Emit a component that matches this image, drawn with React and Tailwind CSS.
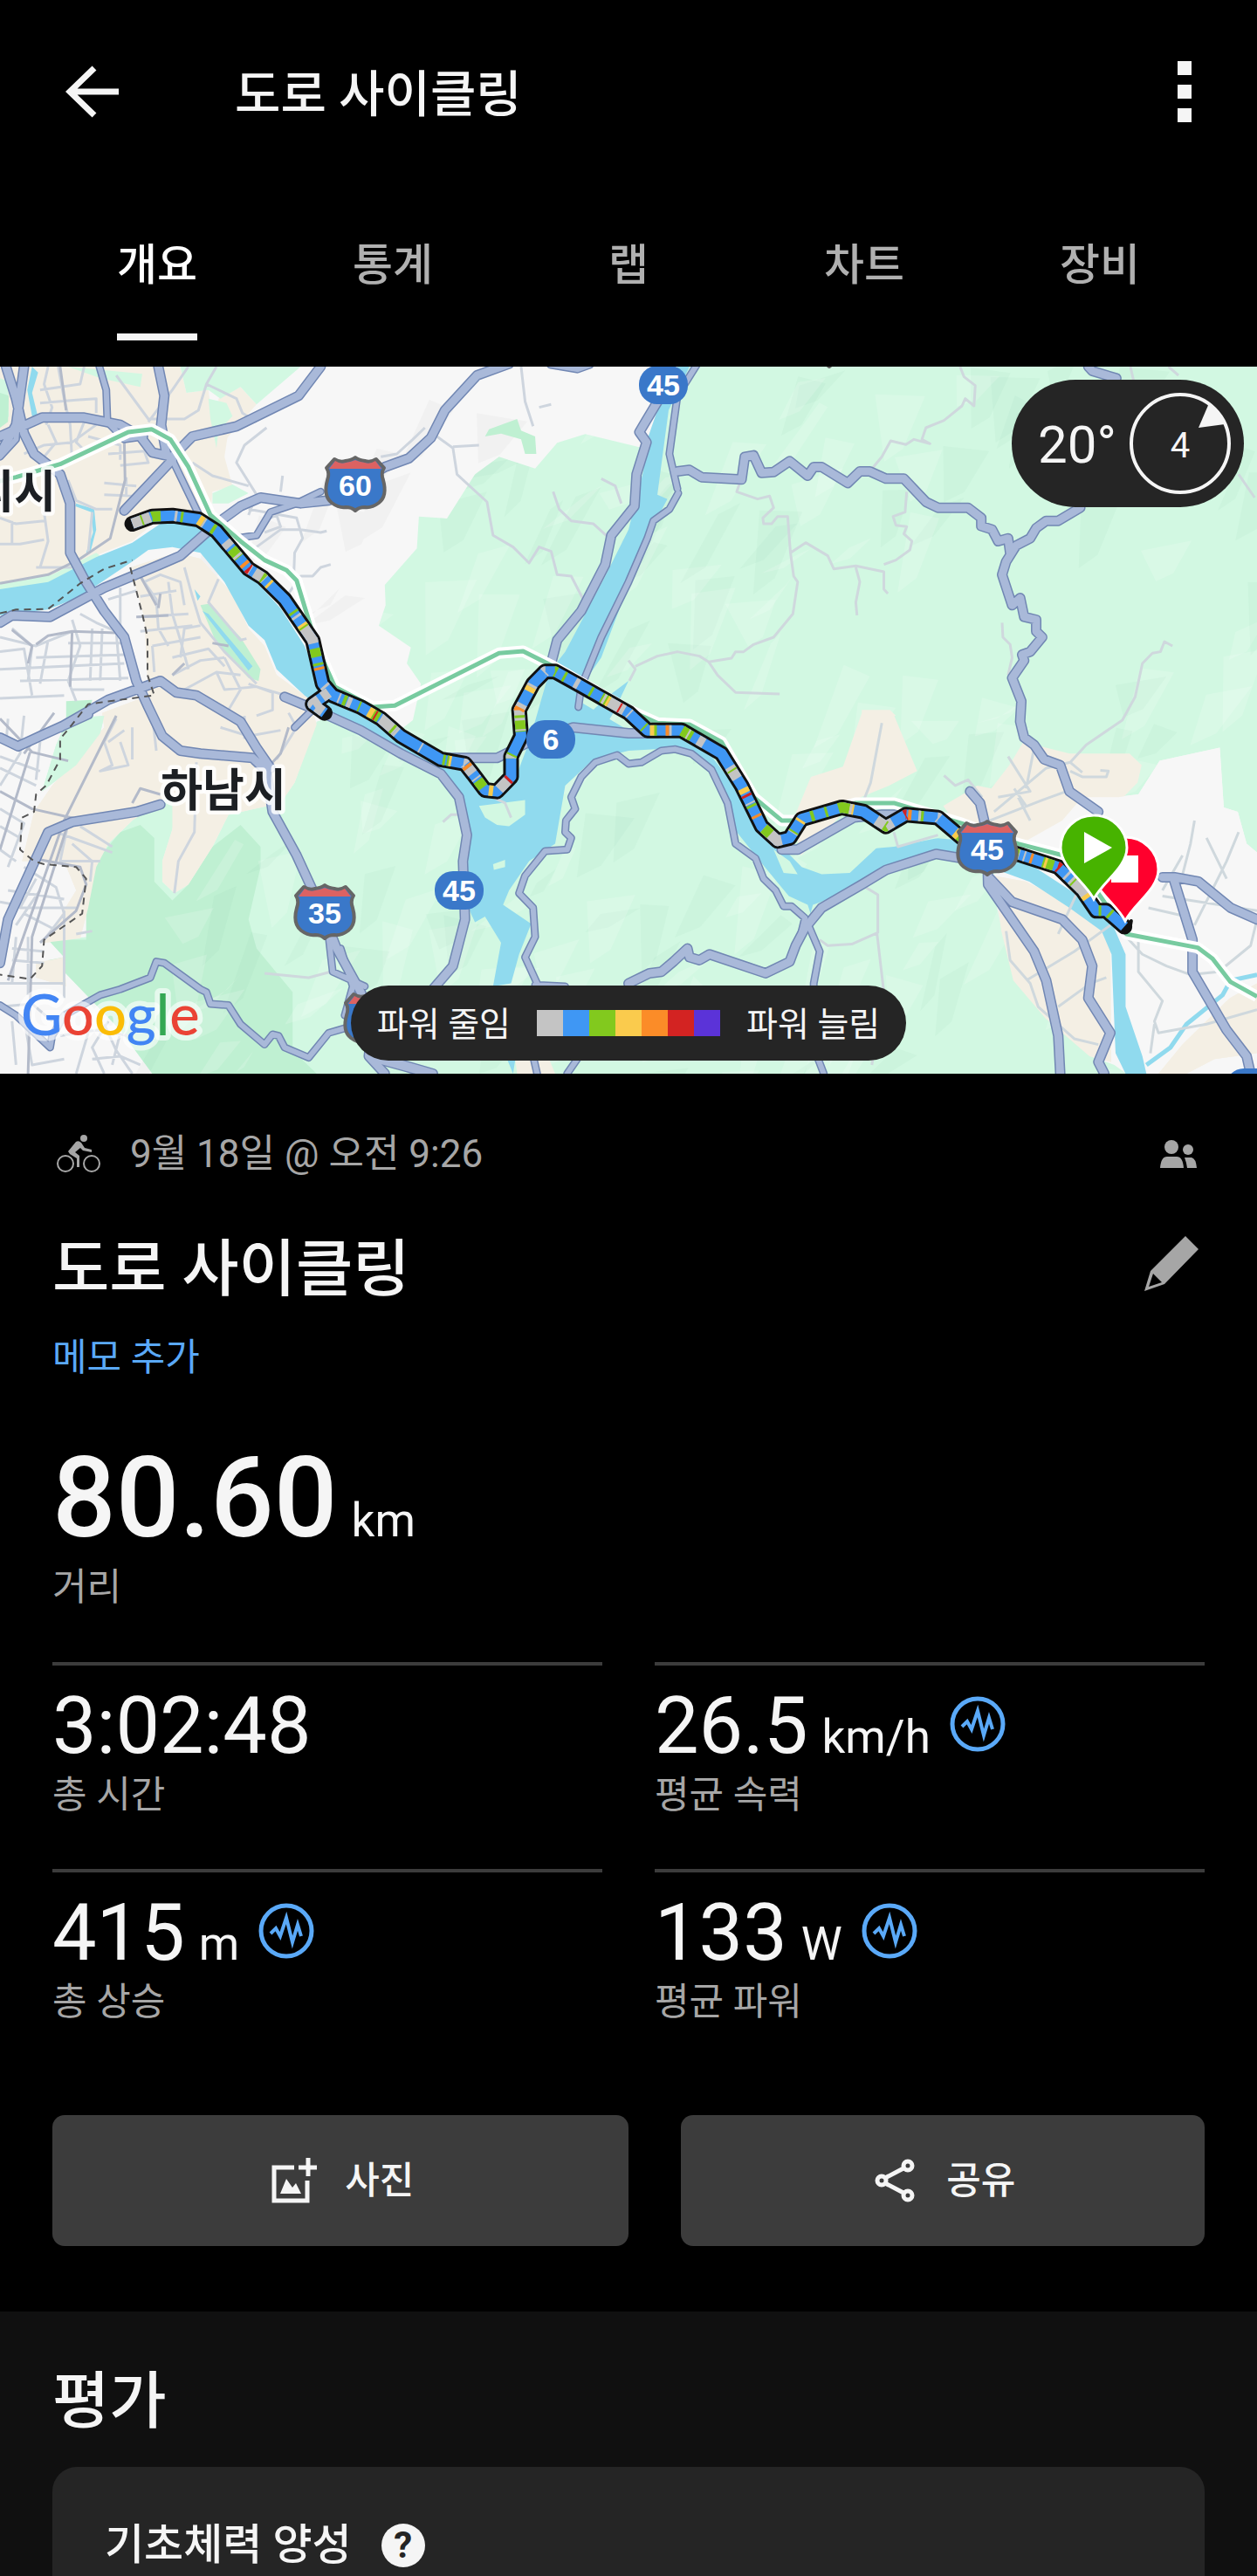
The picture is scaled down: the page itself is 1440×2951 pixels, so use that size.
import { useState } from "react";

const tabs = ["개요", "통계", "랩", "차트", "장비"];

const legendColors = [
  "bg-[#c4c4c4]",
  "bg-[#3f97f4]",
  "bg-[#82c91e]",
  "bg-[#facb4d]",
  "bg-[#fb8c28]",
  "bg-[#d32322]",
  "bg-[#5b33d8]",
];

const stats = [
  { value: "3:02:48", unit: "", label: "총 시간", chart: false },
  { value: "26.5", unit: "km/h", label: "평균 속력", chart: true },
  { value: "415", unit: "m", label: "총 상승", chart: true },
  { value: "133", unit: "W", label: "평균 파워", chart: true },
];

// Map geometry lives on a 3136 x 2430 grid that is scaled down to 1440 x 810
const greens = [
  "M1700,0 L3136,0 L3136,1670 L3110,1640 L3088,1530 L3053,1515 L3043,1310 L2893,1355 L2840,1470 L2700,1490 L2560,1700 L2470,1750 L2500,1940 L2530,2110 L2610,2240 L2720,2370 L2780,2400 L2810,2430 L380,2430 L300,2280 L160,2080 L120,2060 L160,2030 L120,1970 L180,1965 L220,1960 L215,1800 L240,1720 L270,1640 L330,1560 L350,1400 L430,1270 L470,1300 L460,1380 L430,1590 L405,1700 L405,1770 L435,1810 L470,1780 L530,1650 L570,1540 L700,1500 L735,1430 L790,1220 L870,1180 L960,1290 L1030,1215 L1050,1090 L1015,1020 L1025,965 L945,890 L962,820 L960,750 L1040,625 L1045,515 L1115,522 L1185,370 L1245,310 L1335,350 L1390,262 L1460,232 L1620,285 Z",
  "M450,0 L750,0 L640,130 L600,70 L550,110 L520,80 L465,90 Z",
  "M520,110 L565,125 L580,170 L545,220 L540,280 L525,180 Z",
  "M0,40 L20,50 L22,170 L0,210 Z",
  "M530,435 L580,405 L620,435 L570,470 L530,470 Z",
  "M170,0 L355,25 L350,70 L250,40 Z",
  "M0,740 L130,715 L240,640 L260,660 L130,745 L0,775 Z",
  "M170,1210 L260,1200 L250,1260 L190,1370 L105,1460 L140,1300 Z",
];

const darkGreens = [
  "M300,1600 L350,1575 L385,1620 L385,1770 L430,1835 L470,1780 L530,1650 L600,1575 L650,1650 L650,1720 L620,1900 L640,2000 L730,2150 L730,2350 L790,2430 L380,2430 L300,2280 L160,2080 L120,2040 L160,2030 L120,1970 L215,1970 L215,1800 L240,1700 Z",
  "M500,820 L520,815 L600,930 L650,1040 L645,1080 L620,1070 L540,950 Z",
  "M1210,240 L1220,215 L1290,180 L1300,220 L1335,240 L1338,300 L1310,300 L1300,250 L1250,230 Z",
  "M165,1150 L230,1145 L225,1175 L165,1210 Z",
  "M0,90 L22,100 L20,190 L0,210 Z",
];

const towns = [
  "M0,0 L450,0 L465,90 L520,80 L535,250 L570,220 L560,310 L580,410 L530,430 L525,510 L400,520 L330,600 L200,670 L120,725 L0,745 Z",
  "M545,110 L600,70 L640,130 L570,240 L545,290 Z",
  "M325,690 L440,640 L500,660 L580,780 L620,900 L660,960 L690,1060 L770,1140 L790,1230 L735,1430 L700,1500 L570,1540 L530,1650 L470,1780 L435,1810 L405,1770 L405,1700 L430,1590 L430,1470 L330,1560 L270,1640 L240,1720 L220,1860 L200,1965 L110,1980 L190,1800 L160,1700 L55,1700 L85,1530 L130,1440 L260,1240 L255,1190 L370,1130 L360,860 Z",
  "M90,2050 L160,2030 L165,2130 L90,2100 Z",
  "M2158,1180 L2228,1190 L2288,1390 L2218,1440 L2130,1490 L2060,1600 L1998,1680 L1978,1560 L2023,1410 L2103,1375 L2150,1190 Z",
  "M2353,1510 L2438,1440 L2473,1450 L2518,1370 L2553,1290 L2668,1330 L2818,1330 L2848,1370 L2838,1430 L2760,1540 L2690,1640 L2560,1640 L2400,1600 Z",
  "M2480,1750 L2560,1770 L2700,1870 L2770,1970 L2772,2390 L2718,2370 L2608,2240 L2528,2110 L2498,1940 Z",
  "M2150,1180 L2220,1180 L2235,1200 L2150,1200 Z",
  "M2890,2430 L2950,2330 L3068,2170 L3136,2120 L3136,2360 L3030,2380 L2960,2430 Z",
  "M1285,2380 L1370,2380 L1385,2430 L1290,2430 Z",
];

const whites = [
  "M2790,1480 L2840,1470 L2893,1355 L3043,1310 L3053,1515 L3088,1530 L3110,1640 L3136,1670 L3136,2110 L3068,2170 L2998,2240 L2858,2400 L2780,2180 L2770,1960 L2650,1780 L2540,1680 L2560,1630 L2650,1560 L2700,1480 Z",
];

const waters = [
  "M0,765 L120,740 L240,655 L330,605 L400,540 L500,540 L600,680 L700,830 L760,960 L800,1090 L870,1170 L980,1260 L1100,1370 L1170,1390 L1230,1480 L1290,1400 L1320,1290 L1370,1050 L1410,980 L1510,720 L1568,560 L1605,360 L1615,250 L1640,150 L1690,0 L1720,0 L1668,150 L1640,440 L1665,455 L1640,520 L1568,750 L1500,1000 L1460,1080 L1445,1150 L1568,1250 L1630,1270 L1700,1270 L1770,1330 L1820,1420 L1870,1510 L1910,1620 L1950,1650 L2000,1720 L2050,1745 L2120,1740 L2190,1650 L2330,1620 L2420,1630 L2570,1710 L2670,1800 L2770,1900 L2808,2020 L2808,2200 L2850,2370 L2860,2430 L2808,2430 L2783,2360 L2773,2020 L2748,1940 L2668,1860 L2568,1770 L2468,1720 L2368,1690 L2298,1690 L2208,1740 L2128,1790 L2048,1840 L2028,1850 L2022,1880 L2015,1850 L1968,1820 L1908,1720 L1838,1600 L1818,1500 L1783,1390 L1700,1310 L1568,1320 L1480,1350 L1410,1440 L1385,1640 L1320,1700 L1270,1800 L1255,1850 L1325,1915 L1295,2020 L1275,2120 L1230,2130 L1250,1980 L1210,1890 L1185,1910 L1165,1850 L1170,1590 L1150,1470 L1100,1400 L1000,1320 L840,1210 L760,1130 L690,1040 L660,940 L620,890 L560,740 L500,640 L430,620 L370,630 L330,670 L200,790 L120,835 L0,855 Z",
  "M80,0 L95,20 L80,90 L95,175 L80,170 L68,80 Z",
  "M505,840 L520,850 L630,1030 L620,1045 Z",
  "M190,470 L235,490 L240,560 L225,640 L215,640 L232,570 L228,500 L188,480 Z",
  "M1480,1180 L1510,1140 L1568,1080 L1530,1190 L1500,1260 Z",
  "M1265,2380 L1285,2385 L1280,2430 Z",
  "M485,765 L500,790 L493,805 Z",
];

const islands = [
  "M1195,1510 L1250,1500 L1310,1490 L1310,1540 L1270,1580 L1240,1575 L1210,1550 Z",
  "M1230,1710 L1260,1695 L1260,1720 L1232,1730 Z",
  "M1930,1660 L1970,1700 L1990,1745 L1955,1740 Z",
  "M1990,1690 L2060,1640 L2250,1560 L2400,1570 L2340,1620 L2230,1650 L2150,1660 L2110,1740 L2050,1740 Z",
];

const majorRoads = [
  "M15,0 L40,110 L60,230 L85,300 L150,370 L175,470 L175,640 L210,730 L260,840 L310,930 L340,1080 L370,1170 L405,1270 L450,1320 L500,1330 L630,1345 L665,1390 L680,1530 L740,1680 L800,1860 L840,2000 L900,2150 L930,2250 L920,2370 L960,2430",
  "M60,0 L40,200 L0,300",
  "M0,240 L105,175 L210,175 L300,200 L350,240 L380,295 L430,310 L480,240 L590,205 L745,100 L800,0",
  "M395,0 L410,100 L402,200 L415,300",
  "M430,320 L310,495",
  "M0,880 L30,855 L125,860 L260,760 L400,680 L450,650 L540,540 L600,480 L650,450 L750,470 L820,460 L960,345 L1020,315 L1075,245 L1110,150 L1190,30 L1270,-10",
  "M1375,-10 L1440,5 L1470,-10",
  "M150,1240 L270,1145 L400,1080 L440,1120 L490,1130 L600,1220 L640,1310 L675,1380",
  "M0,2050 L20,1900 L120,1600 L180,1565 L340,1530 L400,1505",
  "M0,1275 L45,1305 L100,1270 L220,1195",
  "M710,1135 L780,1175 L900,1250 L1000,1330 L1100,1400 L1145,1480 L1165,1610 L1155,1700 L1160,1900 L1130,2060 L1080,2140",
  "M2420,1460 L2445,1500 L2462,1600 L2465,1780 L2580,2010 L2610,2110 L2640,2300 L2645,2430",
  "M2470,1760 L2525,1840 L2650,1900 L2700,1970 L2725,2060 L2715,2170 L2770,2290 L2740,2390 L2755,2430",
  "M1568,2120 L1620,2085 L1650,2080 L1680,2045 L1715,2000 L1720,2030 L1745,2040 L1770,2020 L1910,2085 L1970,2045 L1985,1990 L2008,1930 L2050,1860 L2150,1780 L2210,1730 L2335,1675 L2400,1690",
  "M2695,485 L2640,530 L2610,530 L2585,555 L2570,590 L2535,615 L2510,670 L2500,715 L2525,820 L2545,795 L2555,860 L2585,870 L2585,910 L2600,930 L2570,980 L2550,990 L2555,1010 L2525,1070 L2548,1150 L2545,1220 L2555,1275 L2580,1300 L2605,1350 L2645,1370 L2668,1460 L2740,1530",
  "M2715,0 L2725,15 L2785,40",
  "M1690,360 L1720,355 L1750,380 L1850,388 L1858,310 L1880,305 L1900,365 L1930,362 L1970,325 L2015,375 L2030,345 L2050,345 L2115,400 L2145,360 L2170,360 L2210,385 L2255,385 L2310,465 L2340,485 L2415,485 L2448,520 L2448,548 L2475,560 L2490,600 L2515,590 L2520,640",
  "M2900,1755 L2930,1755 L2990,1770 L3070,1860 L3136,1900",
  "M2930,1770 L2975,1970 L2975,2080 L3060,2280 L3110,2370 L3120,2430",
  "M1645,110 L1610,190 L1595,225 L1613,260 L1588,370 L1583,480 L1525,580 L1510,680 L1450,840 L1390,940 L1375,1020",
  "M1950,1660 L1990,1660 L2130,1550 L2200,1540 L2250,1540",
  "M1120,1345 L1240,1345 L1320,1290 L1430,1240 L1568,1260 L1640,1260",
  "M930,2370 L1080,2430",
];

const minorHighways = [
  "M248,0 L265,80 L268,190 L310,250 L360,240",
  "M590,590 L640,580 L675,500 L740,470 L800,430",
  "M430,320 L465,420 L500,520",
  "M735,1240 L790,1165",
  "M1740,-10 L1690,100 L1670,300 L1690,420",
  "M1692,435 L1670,490 L1630,530 L1615,590 L1568,740 L1500,930 L1450,1100 L1443,1170",
  "M1340,2430 L1330,2370 L1340,2120 L1310,2030 L1335,1960 L1330,1860 L1295,1810 L1310,1750 L1360,1665 L1415,1660 L1425,1620 L1410,1600 L1412,1560 L1435,1520 L1425,1480 L1450,1410 L1485,1360 L1540,1335 L1568,1365 L1600,1360 L1650,1320 L1685,1315 L1725,1330 L1775,1385 L1815,1500 L1835,1640 L1885,1690 L1905,1760 L1935,1800 L1955,1855 L1975,1855 L2008,1895 L2000,1940",
  "M2020,1930 L2045,2010 L2030,2120 L2030,2340 L2055,2430",
  "M0,2195 L40,2230 L125,2340 L130,2300 L160,2230 L250,2160 L300,2140 L375,2100 L390,2045 L410,2050 L500,2140 L515,2150 L525,2190 L570,2195 L600,2260 L660,2330 L680,2295 L695,2300 L710,2340 L770,2375 L820,2290 L870,2270",
  "M820,1960 L830,2080 L910,2130",
  "M850,2000 L880,2130 L860,2230",
  "M1335,2125 L1410,2130",
  "M1440,2380 L1415,2430",
  "M930,2380 L1010,2410 L1060,2430",
  "M0,310 L40,250 L45,150",
];

const streets = [
  "M120,0 L110,60 L130,140 L115,200",
  "M145,0 L160,110 L175,200 L180,330",
  "M100,80 L200,60 L210,0",
  "M100,125 L190,115 L240,110 L240,160",
  "M120,200 L140,260 L110,310",
  "M210,190 L190,260 L220,300 L290,260",
  "M220,240 L300,270 L300,320",
  "M270,300 L360,290 L370,330 L300,340",
  "M60,300 L110,270 L180,260 L240,200",
  "M290,30 L370,180 L460,180 L495,150 L515,60 L540,0",
  "M470,0 L430,80 L370,190",
  "M515,60 L590,110 L605,160 L640,190",
  "M665,210 L610,270 L590,330 L640,440 L620,510",
  "M480,330 L530,375 L620,410",
  "M620,490 L740,520 L755,590 L735,640 L733,720",
  "M640,620 L700,560 L750,560 L800,570 L815,565",
  "M700,430 L705,375",
  "M660,530 L690,510 L700,550 L660,570",
  "M170,390 L190,460 L240,490 L280,490",
  "M260,400 L340,410 M260,440 L340,445 M315,380 L315,440",
  "M0,520 L40,540 L110,530 M0,610 L50,610 L110,595",
  "M30,530 L30,610 M110,500 L120,600 L100,690",
  "M230,500 L220,640 M90,690 L180,690",
  "M350,720 L390,800 L395,900 L420,960",
  "M460,690 L480,790 L500,880 L560,980 L640,1090",
  "M360,740 L400,715 L450,740 L460,820",
  "M350,790 L440,770 M345,860 L470,850 M350,910 L480,890 M380,960 L500,930",
  "M420,740 L430,850 L450,940 L470,1040",
  "M380,960 L385,1050 M430,1000 L520,970 L560,1030",
  "M545,730 L520,810 L600,940 L615,935",
  "M430,1060 L500,1010 L560,1000 M460,1110 L540,1050 L600,1060",
  "M500,890 L460,900 L450,1000 M540,1050 L560,1110 L640,1100",
  "M560,1000 L600,1110 L570,1180 M620,1090 L680,1120 L680,1180 L640,1200",
  "M640,1100 L760,1150 M720,1190 L740,1240 L690,1350",
  "M0,930 L90,960 L180,910 M0,980 L60,970 L80,1130",
  "M30,900 L80,960 L70,1080 M120,940 L100,1090",
  "M180,870 L200,960 L170,1080 L190,1150",
  "M200,850 L240,880 L290,910 M230,900 L225,1080 M255,900 L250,1080 M290,910 L300,1080",
  "M90,1000 L310,990 M0,1040 L310,1020 M50,1080 L320,1070 M0,1140 L160,1130",
  "M170,950 L310,950 M180,1110 L260,1110",
  "M300,760 L300,900 M270,800 L340,770",
  "M60,1200 L50,1330 L0,1440 M100,1290 L90,1420 M0,1340 L100,1390 M0,1380 L90,1440 M20,1210 L15,1300",
  "M0,1520 L60,1570 L20,1720 M0,1580 L50,1620 M0,1660 L40,1700",
  "M60,1720 L140,1790 L160,1880 L110,1970 M90,1760 L50,1860 L190,1860",
  "M20,1800 L160,1830 M60,1880 L130,1930 M40,1920 L100,1800 M0,1840 L40,1850",
  "M30,2000 L110,2010 M30,2040 L110,2050 M40,1960 L30,2120 M70,1960 L70,2160 M0,2120 L160,2120",
  "M160,1870 L160,2170 M190,1950 L230,1940",
  "M0,2200 L80,2190 L130,2250 M60,2240 L80,2400 L160,2380 M150,2300 L240,2280 L320,2300",
  "M220,2290 L190,2430 M260,2260 L290,2350 L330,2430 M30,2250 L40,2400 M230,2380 L300,2370 L350,2400",
  "M270,2250 L230,2340 L260,2430 M300,2290 L280,2400",
  "M290,1210 L260,1290 L280,1370 L250,1390 L320,1370 L300,1290",
  "M330,1240 L330,1350 M270,1290 L310,1250",
  "M140,1600 L280,1670 M170,1570 L150,1700 L250,1700 M200,1580 L280,1650 M180,1640 L230,1700 L225,1770",
  "M490,1360 L485,1600 L445,1700 L435,1810",
  "M550,1240 L620,1270 L700,1250 M610,1200 L610,1280",
  "M380,1200 L390,1320",
  "M1300,0 L1310,120 L1330,205 M1345,140 L1375,130",
  "M1060,210 L1030,250 L990,300 L950,310",
  "M1090,240 L1130,280 L1140,370 L1215,465 L1230,580 L1280,620 L1320,675 L1345,620 L1375,635 L1390,715 L1425,720 L1455,800",
  "M1130,275 L1195,270",
  "M1380,430 L1395,490 L1425,530 L1480,540 L1520,590",
  "M1500,385 L1535,410 L1550,470",
  "M720,780 L750,720 L780,720 L800,690 L825,680",
];

const faintRoads = [
  "M2395,0 L2405,35 L2433,65 L2430,135 L2408,110 L2400,135 L2355,185 L2310,210 L2300,250 L2320,265 L2280,250 L2260,268 L2222,255 L2200,310 L2170,360",
  "M1848,390 L1838,430 L1890,455 L1920,445 L1930,485 L1903,520 L1905,540 L1925,540 L1940,515 L1965,515 L1972,640 L1980,720 L1990,740 L1978,850 L1930,930 L1880,955 L1855,980 L1835,980 L1825,1002 L1768,1015 L1745,995 L1690,980 L1640,995 L1585,1030",
  "M1972,640 L2010,605 L2065,650 L2080,695 L2135,685 L2205,705 L2205,765 L2215,780",
  "M2135,690 L2145,740 L2135,810 L2138,855",
  "M2205,680 L2235,665 L2270,630 L2275,600 L2255,575 L2262,550 L2235,545 L2228,515 L2258,500 L2262,430",
  "M1768,1015 L1790,1060 L1835,1120 L1945,1125",
  "M2500,880 L2502,930 L2520,955 L2525,1000 L2515,1060",
  "M2925,960 L2905,945 L2895,980 L2875,985 L2850,1020 L2832,1135 L2800,1215 L2710,1300 L2670,1360",
  "M2200,1225 L2172,1430 L2155,1490",
  "M2355,1405 L2383,1440 L2415,1420 L2450,1480",
  "M2515,1340 L2570,1460 L2490,1480 M2530,1450 L2560,1510 M2480,1530 L2610,1380 L2670,1360 L2700,1395",
  "M2470,1560 L2600,1490 L2660,1460 M2540,1480 L2570,1560 M2580,1310 L2560,1450",
  "M2670,1390 L2700,1410 L2760,1410 L2765,1390 L2745,1388",
  "M1568,1010 L1585,1040 L1570,1080",
  "M2045,1970 L2065,1990 L2125,1985 L2190,1945 L2190,1815 L2160,1790",
  "M2188,1950 L2205,2150 L2175,2400",
  "M2230,1600 L2240,1650 L2340,1610",
  "M2510,1940 L2520,2040 L2570,2120 L2590,2200 L2680,2310 L2740,2330",
  "M2560,2110 L2680,2010 L2770,1920 M2640,2200 L2720,2120 L2760,2100",
  "M2690,1800 L2640,1950",
  "M2810,1960 L2850,2020 L2910,2060 L2970,2090 L3040,2080 L3120,1990 L3136,1900",
  "M2840,1970 L2840,2080 L2900,2180 L2880,2250 L2890,2290 L3010,2260 L3136,2210",
  "M2980,1560 L2970,1640 L2940,1800 M3090,1600 L3060,1700 L2980,1920",
  "M3010,1620 L3060,1760 M2900,1820 L3136,1870 M2950,1680 L2900,1800",
  "M2865,1860 L2960,1890 L2970,1930 M2880,2260 L2870,2360",
  "M1230,1480 L1260,1500 L1275,1550",
  "M1105,1565 L1125,1540 L1150,1540",
  "M660,2085 L770,2100 L825,2080",
  "M2830,60 L2820,0 M2915,0 L2940,30",
  "M3090,370 L3130,450",
];

const darkStreets = [
  "M30,905 L80,960 L70,1020 M90,955 L120,925 L180,910 L290,915",
  "M180,910 L175,1100 M0,1210 L80,1325 L170,1355",
  "M75,1325 L0,1660 M290,1200 L160,1560 L20,2110",
  "M150,0 L165,150 M310,250 L312,390 L275,590 L200,660 L120,715 L0,745",
  "M135,1190 L60,1330 M170,1570 L80,1960 L70,2430",
  "M400,780 L395,830 M340,860 L420,855 M430,1060 L460,1020",
  "M0,1460 L80,1520 L210,1560 M80,1690 L200,1720 L215,1780 L190,1870 L100,1980",
  "M530,950 L570,960 M350,720 L390,820",
  "M720,1240 L700,1330 L680,1360 M330,1500 L350,1450 L400,1470",
];

const borders = [
  "M0,848 L40,835 L120,833 L200,745 L260,695 L330,665",
  "M325,690 L355,850 L368,930 L368,1060 L385,1130 L300,1145 L220,1160 L180,1230 L150,1280 L150,1350 L115,1440 L90,1470 L85,1530 L55,1550 L50,1660 L85,1700 L110,1710 L190,1720 L215,1760 L205,1880 L110,1970 L105,2060 L75,2105 L0,2090",
];

const railway =
  "M-20,400 L40,380 L150,335 L320,225 L378,215 L425,250 L470,345 L525,510 L600,600 L660,665 L715,700 L740,735 L790,960 L835,1100 L930,1170 L985,1165 L1245,985 L1305,978 L1380,1030 L1568,1180 L1640,1225 L1720,1230 L1800,1290 L1880,1480 L1950,1560 L1990,1560 L2135,1500 L2230,1500 L2400,1570 L2540,1640 L2680,1690 L2810,1950 L2988,1997 L3025,2035 L3070,2115 L3136,2165";

const route =
  "M330,540 L380,515 L430,512 L495,525 L540,565 L620,695 L655,725 L710,800 L780,940 L805,1090 L830,1130 L900,1170 L950,1210 L1000,1270 L1100,1350 L1160,1365 L1180,1400 L1210,1455 L1240,1460 L1275,1410 L1275,1340 L1300,1270 L1295,1180 L1330,1090 L1360,1048 L1385,1048 L1440,1090 L1568,1190 L1615,1250 L1700,1250 L1800,1330 L1850,1440 L1900,1580 L1940,1630 L1970,1620 L2000,1555 L2100,1515 L2155,1530 L2210,1580 L2260,1540 L2340,1550 L2400,1620 L2550,1680 L2640,1720 L2700,1800 L2735,1870 L2760,1870 L2805,1925";
const routeSpur = "M820,1120 L780,1160 L810,1190";

const powerDashes = [
  { color: "#c4c4c4", dash: "22 96 8 41 14 67 26 83 5 38", offset: 0 },
  { color: "#82c91e", dash: "10 62 4 29 13 88 3 47", offset: -24 },
  { color: "#facb4d", dash: "6 103 3 58 5 131", offset: -78 },
  { color: "#c4c4c4", dash: "3 31 2 52 3 19 2 74", offset: -50 },
  { color: "#fb8c28", dash: "4 148 3 209", offset: -150 },
  { color: "#d32322", dash: "3 231 2 187", offset: -158 },
  { color: "#82c91e", dash: "2 44 3 71", offset: -11 },
];

// Relief shading: slanted slivers from a fixed seed
const facets = (() => {
  let seed = 41;
  const rnd = () => {
    seed = (seed * 16807) % 2147483647;
    return seed / 2147483647;
  };
  return Array.from({ length: 240 }, () => {
    const x = Math.round(380 + rnd() * 2760);
    const y = Math.round(rnd() * 2430);
    const a = Math.round(20 + rnd() * 110);
    const b = Math.round(-60 + rnd() * 100);
    const c = Math.round(-90 + rnd() * 60);
    const h = Math.round(60 + rnd() * 170);
    return {
      d: `M${x},${y} l${a},${b} l${c},${h} l${Math.round(c / 2 - 20)},${Math.round(h / 4)} Z`,
      light: rnd() > 0.5,
    };
  });
})();

const Lines = ({ paths, color, width, ...rest }) => (
  <path
    d={paths.join(" ")}
    fill="none"
    stroke={color}
    strokeWidth={width}
    strokeLinejoin="round"
    vectorEffect="non-scaling-stroke"
    {...rest}
  />
);

const Interstate = ({ x, y, label }) => (
  <g transform={`translate(${x - 35} ${y - 31})`}>
    <path
      d="M11,2 Q17,6 24,4 Q31,3 35,0 Q39,3 46,4 Q53,6 59,2 L68,12 Q64,18 67,26 Q72,44 62,52 Q54,58 46,57 Q39,57 35,61 Q31,57 24,57 Q16,58 8,52 Q-2,44 3,26 Q6,18 2,12 Z"
      fill="#3a78c9"
      stroke="#666"
      strokeWidth="4"
      strokeLinejoin="round"
    />
    <path d="M12,4 Q18,8 24,6 Q31,5 35,3 Q39,5 46,6 Q52,8 58,4 L65,13 H5 Z" fill="#dc6262" />
    <text x="35" y="44" textAnchor="middle" fill="#fff" className="font-['Liberation_Sans',Arial,sans-serif] text-[34px] font-bold">
      {label}
    </text>
  </g>
);

const Highway = ({ x, y, label }) => (
  <g>
    <rect x={x - 28} y={y - 22} width="56" height="44" rx="21" fill="#3a78c9" />
    <text x={x} y={y + 12} textAnchor="middle" fill="#fff" className="font-['Liberation_Sans',Arial,sans-serif] text-[34px] font-bold">
      {label}
    </text>
  </g>
);

const Pin = ({ x, y, color, children }) => (
  <g transform={`translate(${x} ${y})`}>
    <path
      d="M0,0 C-10,-20 -38,-36 -38,-59 A38,37 0 0 1 38,-59 C38,-36 10,-20 0,0 Z"
      fill={color}
      stroke="#fff"
      strokeWidth="3"
    />
    {children}
  </g>
);

const CityName = ({ x, y, anchor, children }) => (
  <text
    x={x}
    y={y}
    textAnchor={anchor}
    fill="#1c1f23"
    stroke="#fff"
    strokeWidth="9"
    strokeOpacity="0.85"
    strokeLinejoin="round"
    paintOrder="stroke"
    className="font-['Noto_Sans_CJK_KR',sans-serif] text-[52px] font-bold"
  >
    {children}
  </text>
);

const RouteMap = () => (
  <svg viewBox="0 0 1440 810" className="block w-full" role="img" aria-label="경로 지도">
    <defs>
      <clipPath id="land">
        <path d={greens[0]} />
      </clipPath>
    </defs>
    <rect width="1440" height="810" fill="#f7f7f7" />
    <g transform="scale(0.4592 0.3333)">
      <path d={facets.slice(0, 60).map((f) => f.d).join(" ")} fill="#000" opacity="0.025" />
      <path d={towns.join(" ")} fill="#f4efe4" />
      <path d={greens.join(" ")} fill="#d2f8e2" />
      <path d={darkGreens.join(" ")} fill="#bff0d2" />
      <g clipPath="url(#land)">
        {facets.map((f, i) => (
          <path key={i} d={f.d} fill={f.light ? "#fff" : "#2a7a55"} opacity={f.light ? 0.16 : 0.03} />
        ))}
      </g>
      <path d={towns.slice(2).join(" ")} fill="#f4efe4" />
      <path d={whites.join(" ")} fill="#f7f7f7" />
      <path d={greens[7]} fill="#d2f8e2" />
      <path d={darkGreens[1]} fill="#bff0d2" />
      <path d={waters.join(" ")} fill="#90daee" />
      <path d={islands.join(" ")} fill="#d2f8e2" />
      <path d="M3136,2090 L3070,2110 L3050,2160 L2960,2260 L2920,2340 L2860,2400" fill="none" stroke="#90daee" strokeWidth="5" vectorEffect="non-scaling-stroke" />
      <Lines paths={streets} color="#ced5de" width="3" />
      <Lines paths={faintRoads} color="#cfd8dd" width="3" />
      <Lines paths={darkStreets} color="#b3bac9" width="3" />
      <Lines paths={minorHighways} color="#7187b3" width="9" strokeLinecap="round" />
      <Lines paths={majorRoads} color="#7187b3" width="12" strokeLinecap="round" />
      <Lines paths={minorHighways} color="#a9b9d9" width="6" strokeLinecap="round" />
      <Lines paths={majorRoads} color="#a9b9d9" width="9" strokeLinecap="round" />
      <Lines paths={borders} color="#555" width="2" strokeDasharray="8 6" />
      <Lines paths={[railway]} color="#fff" width="13" />
      <Lines paths={[railway]} color="#78cba0" width="5" />
      <Lines paths={["M2805,1925 L2818,1935 L2822,1905"]} color="#111" width="4" strokeLinecap="round" />
      <Lines paths={[route, routeSpur]} color="#111" width="18" strokeLinecap="round" />
      <Lines paths={[route, routeSpur]} color="#3f97f4" width="12" />
      {powerDashes.map((p, i) => (
        <Lines key={i} paths={[route]} color={p.color} width="12" strokeDasharray={p.dash} strokeDashoffset={p.offset} />
      ))}
      <Lines paths={[routeSpur]} color="#c4c4c4" width="12" strokeDasharray="9 5" />
    </g>
    <Interstate x={950} y={-30} label="" />
    <Interstate x={407} y={135} label="60" />
    <Interstate x={372} y={625} label="35" />
    <Interstate x={1131} y={552} label="45" />
    <Interstate x={429} y={748} label="" />
    <Highway x={760} y={21} label="45" />
    <Highway x={631} y={427} label="6" />
    <Highway x={526} y={600} label="45" />
    <Highway x={1432} y={826} label="" />
    <CityName x={64} y={162} anchor="end">구리시</CityName>
    <CityName x={256} y={504} anchor="middle">하남시</CityName>
    <Pin x={1289} y={635} color="#ff002d">
      <rect x="-16" y="-75" width="31" height="31" fill="#fff" />
    </Pin>
    <Pin x={1253} y={610} color="#47b300">
      <path d="M-11,-77 L21,-59 L-11,-41 Z" fill="#fff" />
    </Pin>
    <text
      x="24"
      y="766"
      stroke="#fff"
      strokeWidth="12"
      strokeOpacity="0.6"
      strokeLinejoin="round"
      paintOrder="stroke"
      className="font-['Lato',sans-serif] text-[65px] font-medium"
    >
      <tspan fill="#4285f4">G</tspan>
      <tspan fill="#ea4335">o</tspan>
      <tspan fill="#fbbc05">o</tspan>
      <tspan fill="#4285f4">g</tspan>
      <tspan fill="#34a853">l</tspan>
      <tspan fill="#ea4335">e</tspan>
    </text>
  </svg>
);

const WeatherBadge = () => (
  <div className="absolute top-[15px] right-[15px] flex h-[146px] w-[266px] items-center justify-between rounded-full bg-[#252525] pr-[14px] pl-[30px]">
    <span className="pt-1 text-[60px] leading-none">20°</span>
    <svg viewBox="0 0 118 118" className="size-[118px]">
      <circle cx="59" cy="59" r="56" fill="none" stroke="#f5f5f5" strokeWidth="4" />
      <path d="M92,13 Q104,22 110,37 L80,41 Z" fill="#f5f5f5" />
      <text x="59" y="75" textAnchor="middle" fill="#f5f5f5" className="text-[40px]">
        4
      </text>
    </svg>
  </div>
);

const PowerLegend = () => (
  <div className="absolute inset-x-0 bottom-[15px] flex justify-center">
    <div className="flex h-[86px] items-center gap-[30px] rounded-full bg-[#252525] px-[30px] text-[39px] leading-none">
      <span className="pt-1">파워 줄임</span>
      <div className="flex">
        {legendColors.map((c) => (
          <span key={c} className={`size-[30px] ${c}`} />
        ))}
      </div>
      <span className="pt-1">파워 늘림</span>
    </div>
  </div>
);

const ChartButton = ({ label }) => (
  <button type="button" aria-label={`${label} 차트`} className="ml-[22px] self-center text-[#5aa9f8]">
    <svg viewBox="0 0 64 64" className="size-16" fill="none" stroke="currentColor">
      <circle cx="32" cy="32" r="29" strokeWidth="5" />
      <path d="M14,35 L20,29 L25,38 L32,17 L39,45 L45,25 L49,38" strokeWidth="4" />
    </svg>
  </button>
);

const App = () => {
  const [activeTab, setActiveTab] = useState("개요");

  return (
    <div className="flex min-h-screen flex-col bg-black font-['Roboto','Noto_Sans_CJK_KR',sans-serif] text-[#f5f5f5]">
      <header className="flex h-[210px] items-center px-[75px]">
        <button type="button" aria-label="뒤로">
          <svg viewBox="0 0 62 60" className="h-[60px] w-[62px]" fill="none" stroke="currentColor" strokeWidth="7">
            <path d="M33,3 L5,30 L33,57 M5,30 H61" />
          </svg>
        </button>
        <h1 className="ml-[132px] flex-1 pt-[6px] text-[57px] leading-none font-medium">도로 사이클링</h1>
        <button type="button" aria-label="더보기" className="flex flex-col gap-[11px]">
          <span className="size-[16px] bg-[#f5f5f5]" />
          <span className="size-[16px] bg-[#f5f5f5]" />
          <span className="size-[16px] bg-[#f5f5f5]" />
        </button>
      </header>

      <nav className="grid h-[210px] grid-cols-5 px-[45px]">
        {tabs.map((tab) => (
          <button
            key={tab}
            type="button"
            onClick={() => setActiveTab(tab)}
            className={`flex flex-col items-center pt-[54px] text-[50px] leading-[80px] font-medium ${
              tab === activeTab ? "text-white" : "text-[#b0b0b0]"
            }`}
          >
            <span className={`h-[126px] border-b-8 ${tab === activeTab ? "border-[#f5f5f5]" : "border-transparent"}`}>
              {tab}
            </span>
          </button>
        ))}
      </nav>

      <div className="relative overflow-hidden">
        <RouteMap />
        <WeatherBadge />
        <PowerLegend />
      </div>

      <main className="px-[60px] pt-[57px] pb-[75px]">
        <div className="flex h-[70px] items-center text-[44px] leading-[70px] text-[#a6a6a6]">
          <svg viewBox="0 0 50 44" className="ml-[5px] h-[44px] w-[50px]" fill="none" stroke="currentColor">
            <circle cx="10" cy="33" r="9" strokeWidth="2" />
            <circle cx="40" cy="33" r="9" strokeWidth="2" />
            <circle cx="31" cy="4" r="4" fill="currentColor" stroke="none" />
            <path d="M13,19 L22,8 Q25,6 28,9 L32,15 L40,17 L40,20 L30,18 L27,15 L21,20 L26,24 L26,37 L23,37 L23,27 L15,22 Z" fill="currentColor" stroke="none" />
          </svg>
          <span className="ml-[34px] flex-1">9월 18일 @ 오전 9:26</span>
          <svg viewBox="0 0 42 32" className="mr-[9px] h-[32px] w-[42px]" fill="currentColor">
            <circle cx="13" cy="8" r="8" />
            <circle cx="32" cy="11" r="6" />
            <path d="M0,32 Q1,19 8,19 H19 Q26,19 27,32 Z M28,20 H36 Q41,21 42,32 H31 Q30,25 28,20 Z" />
          </svg>
        </div>

        <div className="mt-[47px] flex h-[100px] items-center">
          <h2 className="flex-1 text-[71px] leading-[100px] font-medium">도로 사이클링</h2>
          <button type="button" aria-label="이름 편집" className="mr-[7px] mb-[14px] text-[#a6a6a6]">
            <svg viewBox="0 0 62 63" className="h-[63px] w-[62px]" fill="currentColor">
              <path fillRule="evenodd" d="M47,0 L62,15 L23,55 L0,63 L7,40 Z M10,43 L5,58 L20,53 Z" />
            </svg>
          </button>
        </div>
        <a href="#memo" className="mt-[21px] block text-[43px] leading-[60px] text-[#5aa9f8]">
          메모 추가
        </a>

        <p className="mt-[61px] flex h-[140px] items-baseline text-[128px] leading-[140px] font-medium">
          80.60<span className="ml-[16px] text-[53px] font-normal">km</span>
        </p>
        <p className="mt-[2px] text-[43px] leading-[60px] text-[#a6a6a6]">거리</p>

        <div className="mt-[56px] grid grid-cols-2 gap-x-[60px]">
          {stats.map((s) => (
            <div key={s.label} className="h-[237px] border-t-4 border-[#3c3c3c] pt-[15px]">
              <p className="flex h-[103px] items-baseline text-[90px] leading-[110px]">
                {s.value}
                {s.unit && <span className="ml-[16px] text-[53px]">{s.unit}</span>}
                {s.chart && <ChartButton label={s.label} />}
              </p>
              <p className="text-[43px] leading-[60px] text-[#a6a6a6]">{s.label}</p>
            </div>
          ))}
        </div>

        <div className="mt-[45px] flex gap-[60px] text-[43px] font-medium">
          <button type="button" className="flex h-[150px] flex-[11] items-center justify-center gap-[32px] rounded-[14px] bg-[#3c3c3c] pl-[6px]">
            <svg viewBox="0 0 52 52" className="size-[52px]" fill="none" stroke="currentColor" strokeWidth="5">
              <path d="M26,11 H3 V49 H41 V26" />
              <path d="M42,0 V21 M31,11 H52" />
              <path d="M10,41 L17,24 L24,34 L28,29 L34,41 Z" fill="currentColor" stroke="none" />
            </svg>
            사진
          </button>
          <button type="button" className="flex h-[150px] flex-[10] items-center justify-center gap-[36px] rounded-[14px] bg-[#3c3c3c] pl-[6px]">
            <svg viewBox="0 0 46 50" className="h-[50px] w-[46px]" fill="none" stroke="currentColor" strokeWidth="5">
              <circle cx="38" cy="8" r="5" />
              <circle cx="8" cy="25" r="5" />
              <circle cx="38" cy="42" r="5" />
              <path d="M12,22 L33,11 M12,28 L33,39" />
            </svg>
            공유
          </button>
        </div>
      </main>

      <section className="flex flex-1 flex-col bg-[#101010] px-[60px] pt-[53px]">
        <h2 className="text-[71px] leading-[100px] font-medium">평가</h2>
        <div className="mt-[25px] flex flex-1 items-start gap-[34px] rounded-t-[28px] bg-[#252525] px-[60px] pt-[60px]">
          <h3 className="text-[49px] leading-[60px] font-medium">기초체력 양성</h3>
          <button type="button" aria-label="도움말" className="mt-[5px] size-[50px] rounded-full bg-[#f5f5f5] text-[42px] leading-[50px] font-bold text-[#252525]">
            ?
          </button>
        </div>
      </section>
    </div>
  );
};

export default App;
